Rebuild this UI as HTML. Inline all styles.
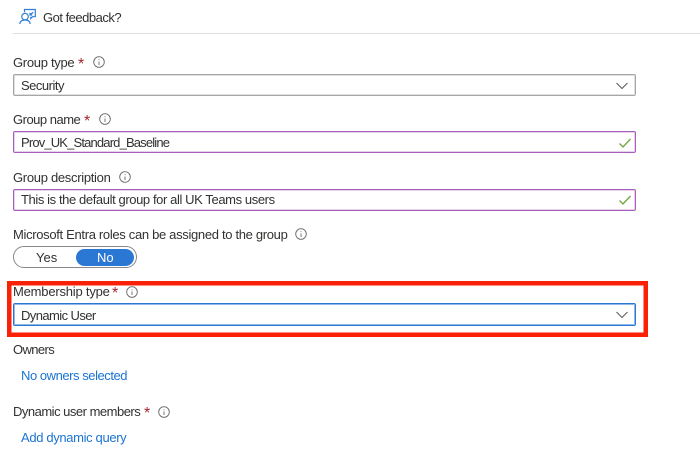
<!DOCTYPE html>
<html><head><meta charset="utf-8">
<style>
html,body{margin:0;padding:0;background:#fff}
body{width:700px;height:453px;overflow:hidden;position:relative;font-family:"Liberation Sans",sans-serif;font-size:13px;color:#323130}
.t{position:absolute;white-space:nowrap;line-height:16px}
.s{position:absolute;color:#a4262c;font-size:16px;line-height:16px}
.b{position:absolute;left:13px;width:621px;height:20px;border:1px solid #a8a6a4;box-shadow:inset 0 0 0 1px #e0dfdd;border-radius:2px;box-sizing:content-box}
.p{border-color:#a85fbc;box-shadow:inset 0 0 0 1px #e6d2ec}
.l{color:#1b74d4}
svg{position:absolute;overflow:visible}
.i{width:12px;height:12px;fill:none;stroke:#6b6967;stroke-width:.9}
</style></head><body>
<svg style="left:19px;top:9px" width="18" height="16" fill="none" stroke="#2f7fd6" stroke-width="1.2"><path d="M5.5 3.2V0.5H16.3V7.7H13.5L11.8 9.5V7.7"/><path d="M14.2 3.2L11 6M11 3.8V6H13.2"/><circle cx="6" cy="7.6" r="3.3"/><path d="M0.8 15C1 12.4 3 11 6 11S11 12.4 11.2 15"/></svg>
<div class="t" style="left:43px;top:10px;letter-spacing:-.5px">Got feedback?</div>
<div style="position:absolute;left:13px;top:33px;width:687px;height:1px;background:#e1dfdd"></div>

<div class="t" style="left:13px;top:55px;letter-spacing:-.3px">Group type</div><span class="s" style="left:78px;top:57px">*</span>
<svg class="i" style="left:93px;top:56px"><circle cx="6" cy="6" r="5.3"/><path d="M6 5.5V9M6 3.2V4.1"/></svg>
<div class="b" style="top:74px"></div>
<div class="t" style="left:21px;top:78px;letter-spacing:-.5px">Security</div>
<svg style="left:616px;top:82px" width="12" height="8" fill="none" stroke="#605e5c" stroke-width="1.1"><path d="M0.5 1L6 6.5L11.5 1"/></svg>

<div class="t" style="left:13px;top:112px;letter-spacing:-.5px">Group name</div><span class="s" style="left:84px;top:114px">*</span>
<svg class="i" style="left:99px;top:113px"><circle cx="6" cy="6" r="5.3"/><path d="M6 5.5V9M6 3.2V4.1"/></svg>
<div class="b p" style="top:131px"></div>
<div class="t" style="left:21px;top:135px;letter-spacing:-.84px">Prov_UK_Standard_Baseline</div>
<svg style="left:619px;top:138px" width="12" height="10" fill="none" stroke="#6fa53a" stroke-width="1.3"><path d="M0.5 5.5L4 9L11.5 1"/></svg>

<div class="t" style="left:13px;top:170px;letter-spacing:-.3px">Group description</div>
<svg class="i" style="left:119px;top:171px"><circle cx="6" cy="6" r="5.3"/><path d="M6 5.5V9M6 3.2V4.1"/></svg>
<div class="b p" style="top:189px"></div>
<div class="t" style="left:21px;top:192px;letter-spacing:-.4px">This is the default group for all UK Teams users</div>
<svg style="left:619px;top:195px" width="12" height="10" fill="none" stroke="#6fa53a" stroke-width="1.3"><path d="M0.5 5.5L4 9L11.5 1"/></svg>

<div class="t" style="left:13px;top:227px;letter-spacing:-.32px">Microsoft Entra roles can be assigned to the group</div>
<svg class="i" style="left:295px;top:228px"><circle cx="6" cy="6" r="5.3"/><path d="M6 5.5V9M6 3.2V4.1"/></svg>
<div style="position:absolute;left:13px;top:246px;width:122px;height:20px;border:1px solid #8a8886;border-radius:12px"></div>
<div style="position:absolute;left:76px;top:249px;width:58px;height:17px;background:#2b78d4;border-radius:9px"></div>
<div class="t" style="left:36px;top:250px">Yes</div>
<div class="t" style="left:97px;top:250px;color:#fff">No</div>

<div style="position:absolute;left:7px;top:281px;width:641px;height:56px;box-sizing:border-box;border:4px solid #fb2106;box-shadow:inset 0 0 0 .5px #fb2106"></div>
<div class="t" style="left:13px;top:284px;letter-spacing:-.2px">Membership type</div><span class="s" style="left:112px;top:286px">*</span>
<svg class="i" style="left:126px;top:286px"><circle cx="6" cy="6" r="5.3"/><path d="M6 5.5V9M6 3.2V4.1"/></svg>
<div class="b" style="top:303px;height:21px;border:1px solid #2b78d4;box-shadow:inset 0 0 0 1px #8fb8ea"></div>
<div class="t" style="left:21px;top:308px;letter-spacing:-.58px">Dynamic User</div>
<svg style="left:616px;top:311px" width="12" height="8" fill="none" stroke="#605e5c" stroke-width="1.1"><path d="M0.5 1L6 6.5L11.5 1"/></svg>

<div class="t" style="left:13px;top:342px;letter-spacing:-.6px">Owners</div>
<div class="t l" style="left:21px;top:368px;letter-spacing:-.45px">No owners selected</div>
<div class="t" style="left:13px;top:404px;letter-spacing:-.5px">Dynamic user members</div><span class="s" style="left:144px;top:406px">*</span>
<svg class="i" style="left:158px;top:406px"><circle cx="6" cy="6" r="5.3"/><path d="M6 5.5V9M6 3.2V4.1"/></svg>
<div class="t l" style="left:21px;top:430px;letter-spacing:-.35px">Add dynamic query</div>
</body></html>
